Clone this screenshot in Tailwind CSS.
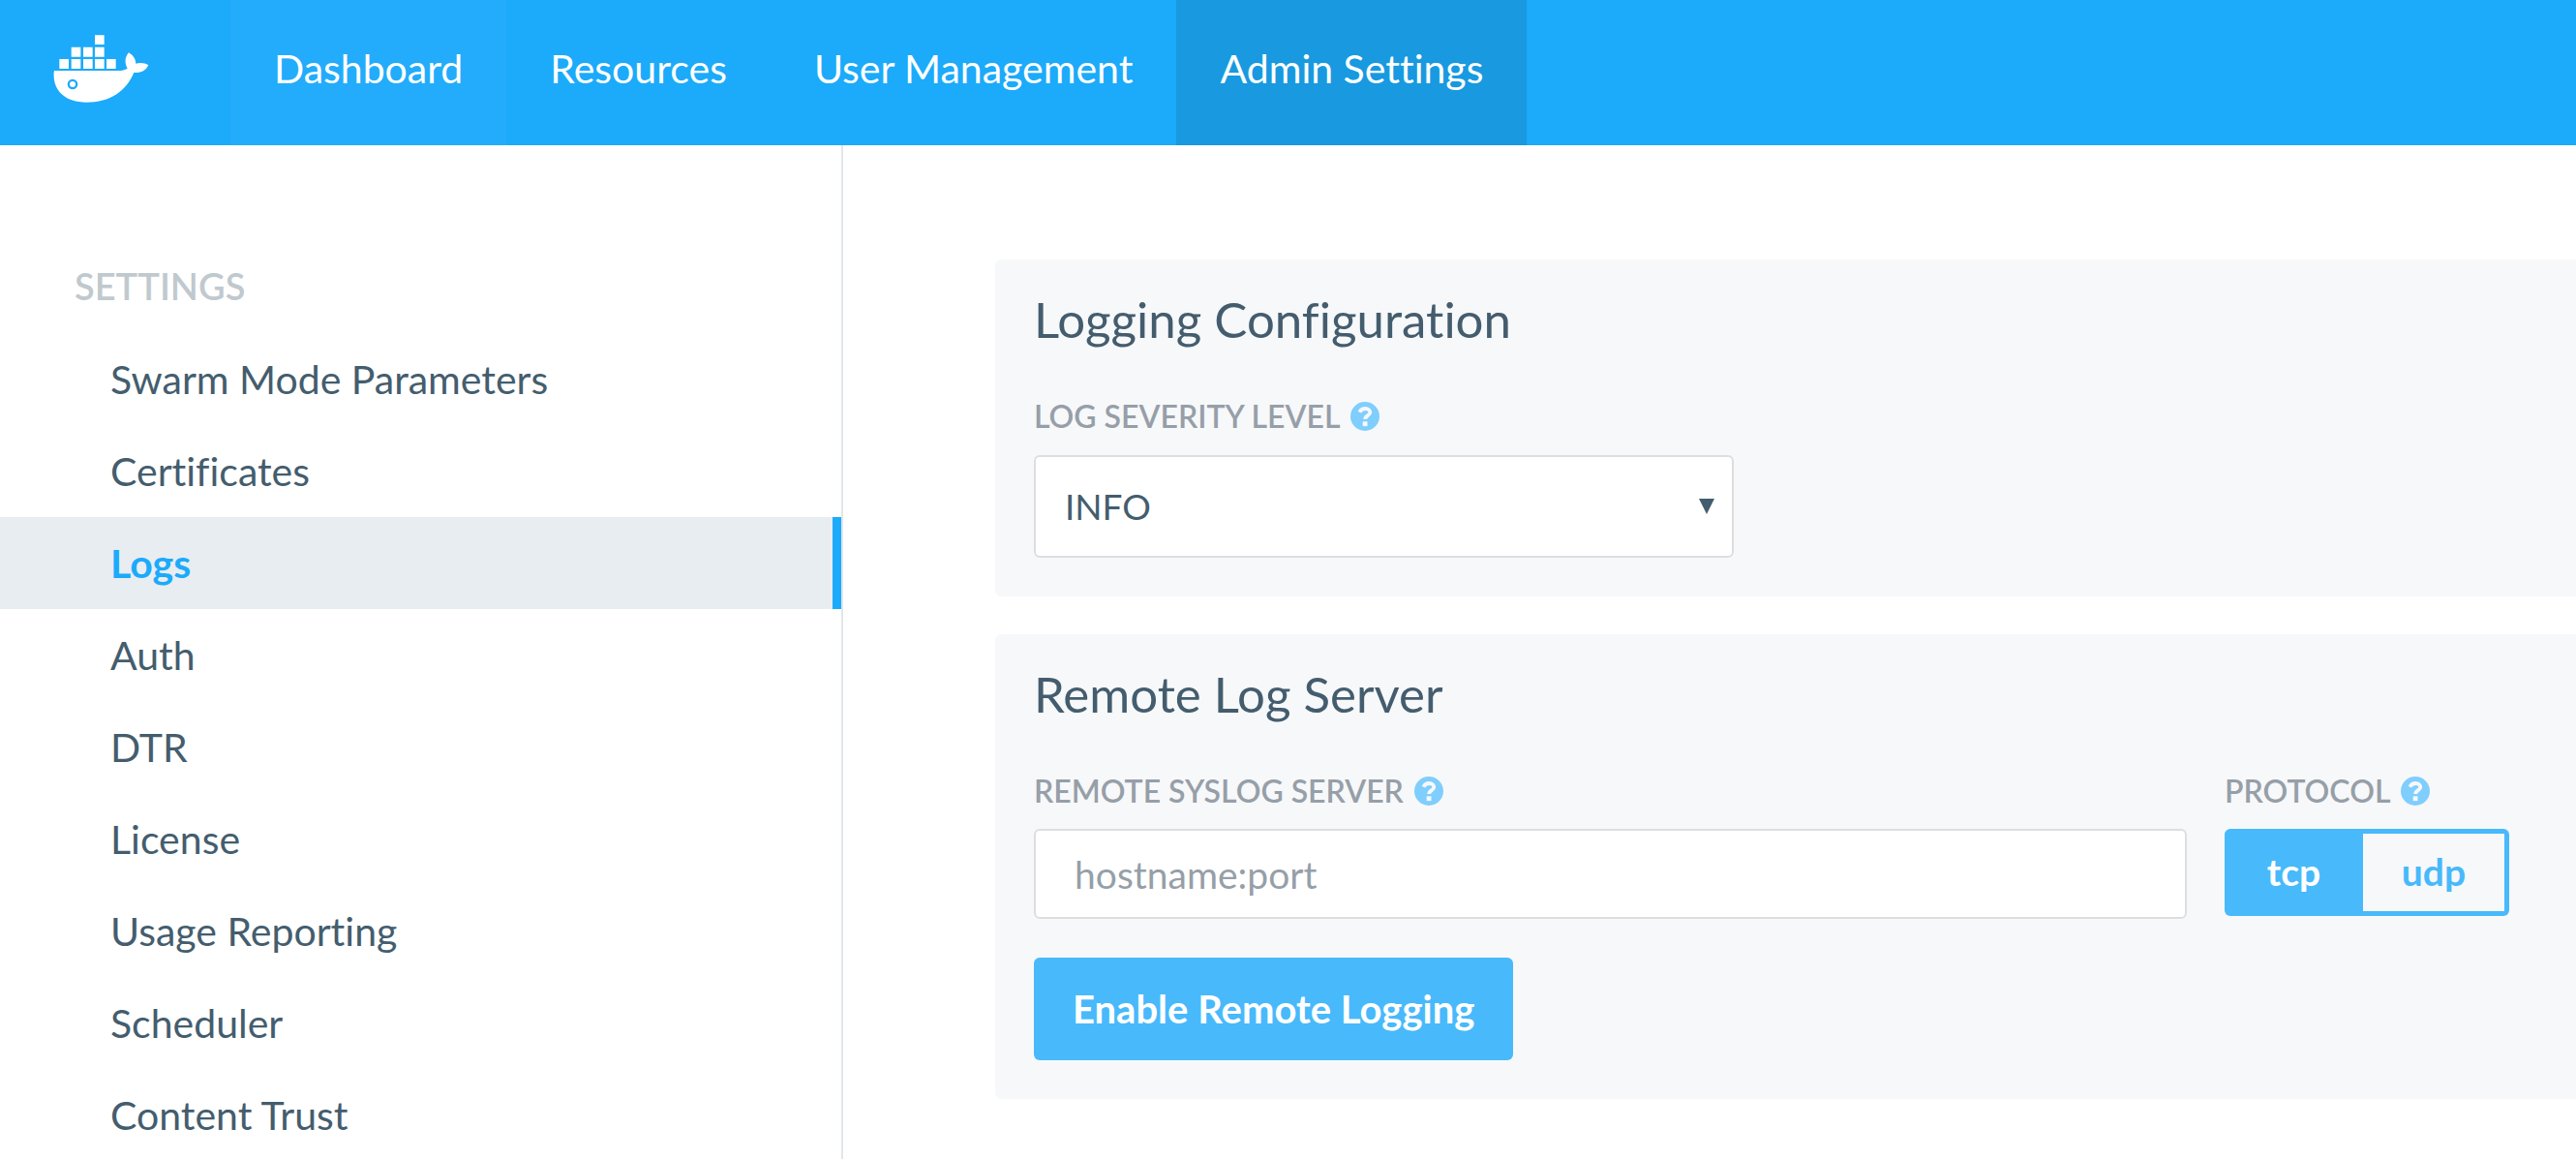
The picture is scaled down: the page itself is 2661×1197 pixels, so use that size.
<!DOCTYPE html>
<html lang="en">
<head>
<meta charset="utf-8">
<meta name="viewport" content="width=device-width, initial-scale=1">
<title>Logs - Admin Settings</title>
<script src="https://cdn.jsdelivr.net/npm/@tailwindcss/browser@4"></script>
</head>
<body class="flex min-h-screen flex-col bg-white font-['Lato',sans-serif] text-[#445d6e] [font-variant-ligatures:none]">

<!-- Shared help glyph -->
<svg class="hidden" aria-hidden="true">
  <symbol id="help" viewBox="0 0 30 30">
    <circle cx="15" cy="15" r="15" fill="#7fcefd"/>
    <path d="M9.500 10.700C10.500 8.300 12.500 7 15.300 7C18.300 7 20.300 8.700 20.300 11C20.300 14.200 15.200 14.200 15.200 18" fill="none" stroke="#f7f8fa" stroke-width="3.800"/>
    <rect x="12.700" y="20.300" width="4.800" height="4.800" fill="#f7f8fa"/>
  </symbol>
</svg>

<header class="flex h-[150px] shrink-0 bg-[#1caafa]">
  <a href="#" aria-label="Docker home" class="flex w-[238px] shrink-0 items-center pb-2 pl-[55px]">
    <svg class="h-[70px] w-[99px]" viewBox="30 24 297 210" fill="#fff" aria-hidden="true">
      <path d="M159 25h29v29h-29zM86 62h29v30h-29zM123 62h29v30h-29zM159 62h29v30h-29zM49 99h29v30h-29zM86 99h29v30h-29zM123 99h29v30h-29zM159 99h29v30h-29zM195 99h29v30h-29z"/>
      <path fill-rule="evenodd" d="M33 135H232C243 135 252 133 260 128C250 111 252 93 264 79C278 88 285 98 286 113C299 109 315 111 325 118C317 136 299 143 280 141C256 198 208 233 132 233C66 233 28 196 32 140zM90 161a16 16 0 1 0 0 32a16 16 0 1 0 0-32z"/>
      <circle cx="90" cy="177" r="9"/>
    </svg>
  </a>
  <nav class="flex text-[41px] leading-[142px] text-white" aria-label="Main">
    <a href="#" class="bg-[#22acfb] px-[45px]">Dashboard</a>
    <a href="#" class="px-[45px]">Resources</a>
    <a href="#" class="px-[45px]">User Management</a>
    <a href="#" class="bg-[#1899e0] px-[45px]" aria-current="page">Admin Settings</a>
  </nav>
</header>

<div class="flex flex-1">
  <aside class="w-[871px] shrink-0 border-r-2 border-[#e1e6ea] pt-[99px]">
    <h2 class="mb-[3px] pl-[77px] text-[38px] leading-[92px] font-semibold text-[#c0c9ce]">SETTINGS</h2>
    <nav class="flex flex-col text-[41px] leading-[95px]" aria-label="Settings">
      <a href="#" class="pl-[114px]">Swarm Mode Parameters</a>
      <a href="#" class="pl-[114px]">Certificates</a>
      <a href="#" class="border-r-[9px] border-[#1caafa] bg-[#e8edf1] pl-[114px] font-bold text-[#1caafa]" aria-current="page">Logs</a>
      <a href="#" class="pl-[114px]">Auth</a>
      <a href="#" class="pl-[114px]">DTR</a>
      <a href="#" class="pl-[114px]">License</a>
      <a href="#" class="pl-[114px]">Usage Reporting</a>
      <a href="#" class="pl-[114px]">Scheduler</a>
      <a href="#" class="pl-[114px]">Content Trust</a>
    </nav>
  </aside>

  <main class="flex min-w-0 flex-1 flex-col gap-[39px] pt-[118px] pl-[157px]">
    <section class="rounded-l-md bg-[#f7f8fa] p-10">
      <h1 class="text-[51px] leading-[44px]">Logging Configuration</h1>
      <div class="mt-[63px] flex h-[30px] items-center gap-[11px]">
        <label for="severity" class="text-[32px] leading-[30px] font-semibold text-[#969fa8]">LOG SEVERITY LEVEL</label>
        <button type="button" aria-label="About log severity level"><svg class="size-[30px]"><use href="#help"/></svg></button>
      </div>
      <div class="relative mt-[25px] w-[723px]">
        <select id="severity" class="block h-[106px] w-full appearance-none rounded-md border-2 border-[#dddee0] bg-white px-[30px] text-[37px]">
          <option>INFO</option>
        </select>
        <svg class="pointer-events-none absolute top-[45px] right-5 h-4 w-4" viewBox="0 0 16 16" aria-hidden="true"><path d="M0 0h16L8 16z" fill="#445d6e"/></svg>
      </div>
    </section>

    <section class="rounded-l-md bg-[#f7f8fa] p-10">
      <h1 class="text-[51px] leading-[44px]">Remote Log Server</h1>
      <form class="mt-[63px]">
        <div class="flex gap-[39px] pr-[29px]">
          <div class="min-w-0 flex-1">
            <div class="flex h-[30px] items-center gap-[11px]">
              <label for="syslog" class="text-[32px] leading-[30px] font-semibold text-[#969fa8]">REMOTE SYSLOG SERVER</label>
              <button type="button" aria-label="About remote syslog server"><svg class="size-[30px]"><use href="#help"/></svg></button>
            </div>
            <input id="syslog" type="text" placeholder="hostname:port" class="mt-6 block h-[93px] w-full rounded-md border-2 border-[#dddee0] bg-white px-10 text-[39px] placeholder:text-[#969fa8]">
          </div>
          <fieldset class="w-[294px] shrink-0">
            <div class="flex h-[30px] items-center gap-[11px]">
              <legend class="text-[32px] leading-[30px] font-semibold text-[#969fa8]">PROTOCOL</legend>
              <button type="button" aria-label="About protocol"><svg class="size-[30px]"><use href="#help"/></svg></button>
            </div>
            <div class="mt-6 flex h-[90px] text-[39px] leading-[78px] font-bold">
              <label class="relative w-[143px] rounded-l-md border-y-5 border-[#48b9fb] bg-[#48b9fb] text-center text-white"><input type="radio" name="protocol" value="tcp" class="sr-only" checked>tcp</label>
              <label class="relative flex-1 rounded-r-md border-5 border-l-0 border-[#48b9fb] text-center text-[#48b9fb]"><input type="radio" name="protocol" value="udp" class="sr-only">udp</label>
            </div>
          </fieldset>
        </div>
        <button type="submit" class="mt-10 block h-[106px] rounded-md bg-[#48b9fb] px-10 text-[40px] font-bold text-white">Enable Remote Logging</button>
      </form>
    </section>
  </main>
</div>
</body>
</html>
